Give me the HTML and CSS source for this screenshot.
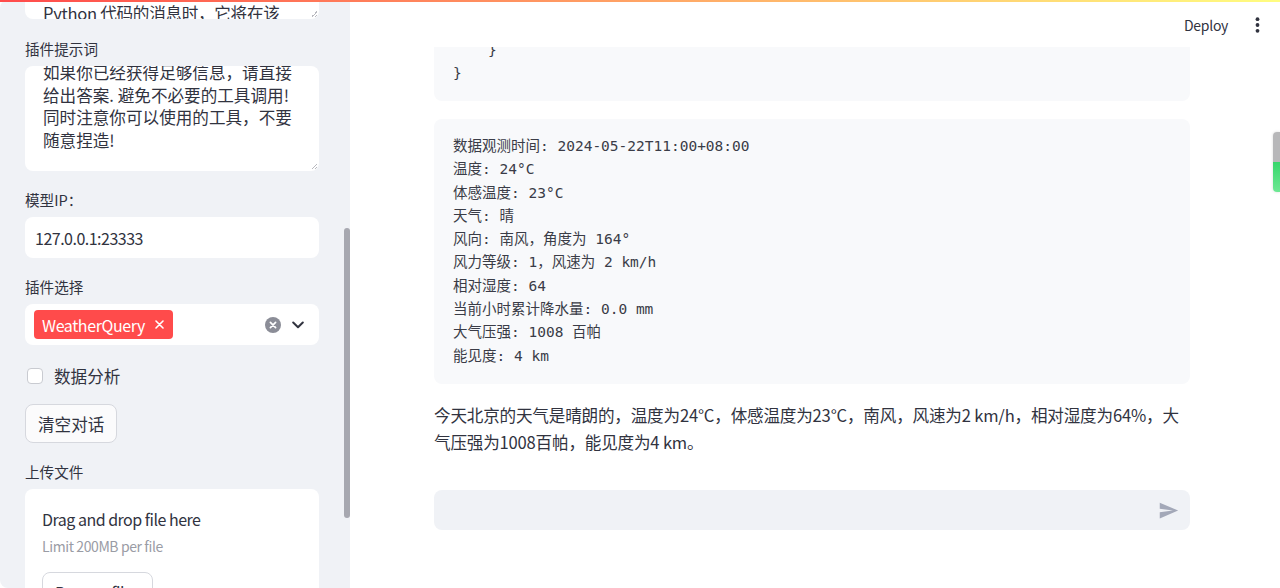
FILE: index.html
```html
<!DOCTYPE html>
<html lang="zh">
<head>
    <meta charset="UTF-8">
    <meta name="viewport" content="width=device-width, initial-scale=1.0">
    <title>Chat</title>
    <link rel="stylesheet" href="styles.css">
</head>
<body>

    <!-- Top decoration line -->
    <div class="decoration"></div>

    <div class="app">

        <!-- Sidebar -->
        <aside class="sidebar">
            <div class="sidebar-content">
                <div class="textarea textarea-top">
                    <div class="textarea-text">Python 代码的消息时，它将在该</div>
                    <span class="resize"></span>
                </div>

                <label class="label">插件提示词</label>
                <div class="textarea textarea-prompt">
                    <div class="textarea-text">如果你已经获得足够信息，请直接给出答案. 避免不必要的工具调用! 同时注意你可以使用的工具，不要随意捏造!</div>
                    <span class="resize"></span>
                </div>

                <label class="label">模型IP：</label>
                <div class="input">127.0.0.1:23333</div>

                <label class="label">插件选择</label>
                <div class="multiselect">
                    <span class="tag">WeatherQuery
                        <svg class="tag-x" width="9" height="9" viewBox="0 0 9 9"><path d="M1 1L8 8M8 1L1 8" stroke="#fff" stroke-width="1.6" stroke-linecap="round"/></svg>
                    </span>
                    <span class="ms-icons">
                        <svg width="16" height="16" viewBox="0 0 16 16"><circle cx="8" cy="8" r="8" fill="#8b8d97"/><path d="M5.4 5.4L10.6 10.6M10.6 5.4L5.4 10.6" stroke="#fff" stroke-width="1.7" stroke-linecap="round"/></svg>
                        <svg width="12" height="8" viewBox="0 0 12 8"><path d="M1.2 1.5L6 6.2L10.8 1.5" fill="none" stroke="#31333f" stroke-width="2" stroke-linecap="round" stroke-linejoin="round"/></svg>
                    </span>
                </div>

                <div class="checkbox-row"><span class="checkbox"></span>数据分析</div>

                <button class="btn">清空对话</button>

                <label class="label">上传文件</label>
                <div class="dropzone">
                    <div class="drop-title">Drag and drop file here</div>
                    <div class="drop-limit">Limit 200MB per file</div>
                    <button class="btn btn-browse">Browse files</button>
                </div>
            </div>
            <div class="sidebar-scroll"></div>
        </aside>

        <!-- Main -->
        <main class="main">
            <header class="header">
                <span class="deploy">Deploy</span>
                <svg width="5" height="16" viewBox="0 0 5 16"><circle cx="2.5" cy="2.2" r="1.9" fill="#31333f"/><circle cx="2.5" cy="8" r="1.9" fill="#31333f"/><circle cx="2.5" cy="13.8" r="1.9" fill="#31333f"/></svg>
            </header>

            <div class="content">
                <pre class="code code-tail"><code>    }
}</code></pre>

                <pre class="code"><code>数据观测时间: 2024-05-22T11:00+08:00
温度: 24°C
体感温度: 23°C
天气: 晴
风向: 南风，角度为 164°
风力等级: 1，风速为 2 km/h
相对湿度: 64
当前小时累计降水量: 0.0 mm
大气压强: 1008 百帕
能见度: 4 km</code></pre>

                <p class="answer">今天北京的天气是晴朗的，温度为24°C，体感温度为23°C，南风，风速为2 km/h，相对湿度为64%，大气压强为1008百帕，能见度为4 km。</p>

                <div class="chat-input">
                    <svg width="21" height="21" viewBox="0 0 24 24"><path d="M2.01 21L23 12 2.01 3 2 10l15 2-15 2z" fill="#a3a8b8"/></svg>
                </div>
            </div>

            <div class="scroll-indicator"></div>
        </main>
    </div>

</body>
</html>
```

FILE: styles.css
```css
/* General */
html {
    background: #fff;
}

body {
    margin: 0;
    font-family: "Noto Sans CJK SC", "Source Sans Pro", sans-serif;
    color: #31333f;
}

.decoration {
    position: fixed;
    top: 0;
    left: 0;
    right: 0;
    height: 2px;
    background: linear-gradient(90deg, #ff4b4b, #fffd80);
    z-index: 10;
}

.app {
    display: flex;
    height: 100vh;
    overflow: hidden;
    border-radius: 8px;
}

/* Sidebar */
.sidebar {
    width: 350px;
    flex-shrink: 0;
    background: #f0f2f6;
    position: relative;
    overflow: hidden;
}

.sidebar-content {
    display: flex;
    flex-direction: column;
    padding: 0 31px 0 25px;
}

.label {
    display: block;
    font-size: 14.6px;
    line-height: 20px;
    margin-bottom: 7px;
}

.textarea {
    position: relative;
    background: #fff;
    border-radius: 8px;
    overflow: hidden;
    padding: 0 18px;
    font-size: 16.6px;
    line-height: 22.7px;
}

.textarea-top {
    height: 19px;
    border-radius: 0 0 8px 8px;
    margin-bottom: 20px;
}

.textarea-top .textarea-text {
    padding-top: 2px;
    white-space: nowrap;
    letter-spacing: -0.3px;
}

.textarea-prompt {
    height: 105px;
    margin-bottom: 19px;
}

.textarea-prompt .textarea-text {
    margin-top: -5px;
}

.resize {
    position: absolute;
    right: 2px;
    bottom: 2px;
    width: 6px;
    height: 6px;
    background: linear-gradient(135deg, transparent 50%, #b8b9bf 50%, #b8b9bf 62%, transparent 62%, transparent 76%, #b8b9bf 76%, #b8b9bf 88%, transparent 88%);
}

.input {
    height: 41px;
    box-sizing: border-box;
    background: #fff;
    border-radius: 8px;
    padding: 0 10px;
    display: flex;
    align-items: center;
    font-size: 16px;
    letter-spacing: -0.5px;
    margin-bottom: 19px;
}

.multiselect {
    height: 41px;
    box-sizing: border-box;
    background: #fff;
    border-radius: 8px;
    display: flex;
    align-items: center;
    padding: 0 15px 0 9px;
    margin-bottom: 19px;
}

.tag {
    height: 29px;
    display: flex;
    align-items: center;
    gap: 10px;
    padding: 0 9px 0 8px;
    background: #ff4b4b;
    color: #fff;
    border-radius: 4px;
    font-size: 16px;
    letter-spacing: -0.4px;
}

.ms-icons {
    margin-left: auto;
    display: flex;
    align-items: center;
    gap: 11px;
}

.checkbox-row {
    height: 24px;
    display: flex;
    align-items: center;
    gap: 11px;
    padding-left: 2px;
    font-size: 16.6px;
    margin-bottom: 16px;
}

.checkbox {
    width: 16px;
    height: 16px;
    box-sizing: border-box;
    border: 1px solid #c9cbd1;
    border-radius: 4px;
    background: #fff;
}

.btn {
    align-self: flex-start;
    height: 39px;
    padding: 0 12px;
    border: 1px solid #d6d8de;
    border-radius: 8px;
    background: #fbfbfc;
    font-family: inherit;
    font-size: 16.6px;
    color: #31333f;
    margin-bottom: 19px;
}

.dropzone {
    background: #fff;
    border-radius: 8px;
    padding: 18px 17px;
    height: 200px;
    display: flex;
    flex-direction: column;
}

.drop-title {
    font-size: 16px;
    line-height: 24px;
    letter-spacing: -0.5px;
}

.drop-limit {
    font-size: 14px;
    line-height: 20px;
    letter-spacing: -0.4px;
    color: #9a9ca5;
    margin-top: 5px;
}

.btn-browse {
    margin-top: 16px;
    background: #fff;
    font-size: 16px;
    letter-spacing: -0.4px;
}

.sidebar-scroll {
    position: absolute;
    right: 0;
    top: 228px;
    width: 6px;
    height: 290px;
    background: #a7a8b0;
    border-radius: 3px;
}

/* Main */
.main {
    flex: 1;
    position: relative;
    background: #fff;
    overflow: hidden;
}

.header {
    height: 47px;
    box-sizing: border-box;
    padding: 3px 20px 0 0;
    display: flex;
    justify-content: flex-end;
    align-items: center;
    gap: 27px;
    font-size: 14px;
    letter-spacing: -0.3px;
}

.content {
    width: 756px;
    margin-left: 84px;
}

.code {
    margin: 0;
    background: #f8f9fb;
    border-radius: 8px;
    padding: 16px 19px;
    font-family: "DejaVu Sans Mono", "Noto Sans CJK SC", monospace;
    font-size: 14.5px;
    line-height: 23.3px;
    color: #3a3c47;
    white-space: pre;
}

.code code {
    display: block;
    font-family: inherit;
}

.code-tail {
    height: 54px;
    box-sizing: border-box;
    padding-top: 0;
    padding-bottom: 0;
    border-radius: 0 0 8px 8px;
    overflow: hidden;
    margin-bottom: 18px;
}

.code-tail code {
    margin-top: -8px;
}

.answer {
    margin: 18px 0 0;
    font-size: 16.6px;
    line-height: 26.6px;
    letter-spacing: -0.2px;
}

.chat-input {
    margin-top: 35px;
    height: 40px;
    border-radius: 8px;
    background: #f0f2f6;
    display: flex;
    align-items: center;
    justify-content: flex-end;
    padding-right: 11px;
}

.scroll-indicator {
    position: absolute;
    right: 0;
    top: 132px;
    width: 7px;
    height: 60px;
    border-radius: 4px 0 0 4px;
    background: linear-gradient(#b7b7b9 0, #b7b7b9 50%, #36d66b 50%, #6ee894 100%);
    box-shadow: 0 0 3px rgba(0, 0, 0, 0.15);
}
```
